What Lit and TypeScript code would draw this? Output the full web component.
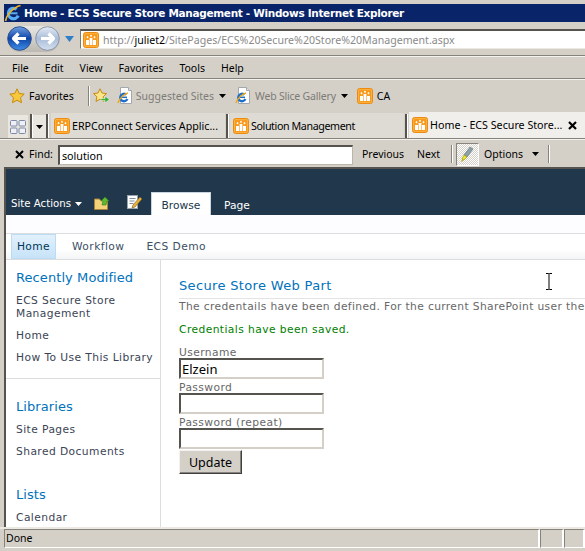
import { LitElement, html, css, svg } from 'lit';
import { customElement } from 'lit/decorators.js';

const spIcon = (size = 16) => html`<svg class="ico" width=${size} height=${size} viewBox="0 0 16 16">
  <rect x=".5" y=".5" width="15" height="15" rx="2" fill="#fbb03b" stroke="#ec8a12"/>
  <rect x="2" y="2" width="12" height="12" fill="#f79a1e"/>
  <path d="M3 8h3v5H3zM6.6 6h2.8v7H6.6zM10 8h3v5h-3z" fill="#fff"/>
  <path d="M4.500 4.200v2M3.500 5.200h2M8 2.800v2M7 3.800h2M11.500 4.200v2M10.500 5.200h2" stroke="#fff" stroke-width=".9"/>
</svg>`;

// page sheet with the blue e and the gold ring
const ieIcon = () => html`<svg class="ico" width="16" height="17" viewBox="0 0 16 17">
  <path d="M3.500 .5h8l3 3v13h-11z" fill="#fff" stroke="#a4a8ae"/>
  <path d="M11.500 .5v3h3" fill="#dfe3e8" stroke="#a4a8ae"/>
  <circle cx="7" cy="10.500" r="3.700" fill="none" stroke="#1f6fc8" stroke-width="2.400" stroke-dasharray="18 6" transform="rotate(25 7 10.500)"/>
  <path d="M4 10.300h6" stroke="#1f6fc8" stroke-width="1.500"/>
  <path d="M1 16c1-4 6-9 10-10" fill="none" stroke="#efa815" stroke-width="1.400"/>
</svg>`;

const arrowDown = (color = '#000') => html`<svg class="ico" width="7" height="4" viewBox="0 0 7 4"><path d="M0 0h7L3.500 4z" fill=${color}/></svg>`;

const navArrow = (points: string) => svg`<path d=${points} fill="none" stroke="#fff" stroke-width="3.200" stroke-linejoin="round"/>`;

@customElement('app-root')
export class AppRoot extends LitElement {
  static styles = css`
    :host {
      display: block;
      width: 585px;
      height: 551px;
      overflow: hidden;
      position: relative;
      background: #d4d0c8;
      font-family: 'Noto Sans', sans-serif;
      font-size: 10.500px;
      color: #000;
    }
    .ico { display: block; flex: none; }

    .title {
      margin: 4px 0 0 4px;
      height: 18px;
      background: #0a246a;
      color: #fff;
      font-family: 'DejaVu Sans', sans-serif;
      font-weight: bold;
      font-size: 10.500px;
      letter-spacing: -0.32px;
      display: flex;
      align-items: center;
      gap: 2px;
      white-space: nowrap;
    }

    .addr-row {
      height: 33px;
      display: flex;
      align-items: center;
      border-bottom: 1px solid #85837c;
      box-shadow: inset 0 -1px 0 #d4d0c8;
    }
    .nav-pill {
      margin-left: 7px;
      width: 53px;
      height: 26px;
      border-radius: 13px;
      background: linear-gradient(#e8e6e2, #bcb9b2);
      display: flex;
      align-items: center;
      gap: 3px;
      flex: none;
    }
    .nav-pill svg { flex: none; }
    .drop { margin: 0 6px 0 5px; }
    .addr {
      flex: 1;
      height: 20px;
      margin-top: 1px;
      background: #fff;
      border-top: 2px solid #55534e;
      border-left: 1px solid #7c7a74;
      border-bottom: 1px solid #ece9e2;
      display: flex;
      align-items: center;
      box-sizing: border-box;
      padding-left: 2px;
      gap: 4px;
      color: #8a8a8a;
      font-size: 10.600px;
      white-space: nowrap;
    }
    .addr b { font-weight: normal; color: #000; }

    .menu {
      border-top: 1px solid #f4f2ee;
      height: 21px;
      display: flex;
      align-items: center;
      padding-left: 12px;
      gap: 16px;
      border-bottom: 1px solid #85837c;
    }
    .favs {
      border-top: 1px solid #f4f2ee;
      height: 31px;
      display: flex;
      align-items: center;
      padding-left: 9px;
      white-space: nowrap;
    }
    .favs .gray { color: #7d7b76; }
    .favs .slice { letter-spacing: -0.2px; }
    .favs .sep { width: 1px; height: 20px; background: #85837c; box-shadow: 1px 0 0 #fff; margin: 0 4px 0 14px; }

    .tabs {
      height: 27px;
      display: flex;
      align-items: flex-end;
      border-bottom: 1px solid #85837c;
      box-shadow: 0 1px 0 #f4f2ee;
      white-space: nowrap;
      font-size: 10.700px;
    }
    .tile {
      margin-left: 8px;
      width: 20px;
      height: 23px;
      display: flex;
      align-items: center;
      justify-content: center;
      background: #e9e6e0;
      flex: none;
    }
    .vsep { width: 2px; height: 24px; background: #55534e; box-shadow: 1px 0 0 #fff; flex: none; }
    .vsep.lead { margin-left: 2px; }
    .tab-drop { width: 13px; height: 23px; margin-left: 1px; background: #e9e6e0; display: flex; align-items: center; justify-content: center; flex: none; }
    .tab {
      height: 25px;
      display: flex;
      align-items: center;
      gap: 2px;
      padding-left: 3px;
      background: #dedbd4;
      box-sizing: border-box;
      flex: none;
    }
    .tab.t1 { width: 174px; margin: 0 1px 0 3px; }
    .tab.t2 { width: 174px; margin: 0 1px 0 2px; letter-spacing: -0.4px; }
    .tab.active {
      flex: 1;
      height: 26px;
      margin-left: 2px;
      background: #f1efec;
    }
    .tab .close { margin-left: 4px; }

    .find {
      height: 28px;
      box-sizing: border-box;
      padding-top: 2px;
      display: flex;
      align-items: center;
      white-space: nowrap;
    }
    .find svg.x { margin-left: 15px; }
    .find .lbl { margin-left: 5px; width: 29px; }
    .find input {
      width: 295px;
      height: 20px;
      box-sizing: border-box;
      margin: 2px 0 0;
      padding: 0 0 0 2px;
      border: 1px solid #b9b6ae;
      border-top: 2px solid #55534e;
      border-left: 2px solid #55534e;
      border-radius: 0;
      font: 10.700px 'Noto Sans', sans-serif;
      outline: none;
    }
    .find .prev { margin-left: 9px; width: 55px; }
    .find .next { width: 34px; }
    .find .bar { width: 1px; height: 18px; background: #85837c; box-shadow: 1px 0 0 #fff; flex: none; }
    .find .bar.end { margin-left: 9px; }
    .pen {
      width: 23px;
      height: 23px;
      margin: 0 5px 0 4px;
      box-sizing: border-box;
      border: 1px solid #85837c;
      border-right-color: #fff;
      border-bottom-color: #fff;
      background: repeating-conic-gradient(#fff 0 25%, #d4d0c8 0 50%) 0 0 / 2px 2px;
      display: flex;
      align-items: center;
      justify-content: center;
      flex: none;
    }
    .find .opt { width: 48px; }

    .page {
      height: 360px;
      margin-left: 4px;
      background: #fff;
      border-left: 2px solid #55534e;
      border-top: 2px solid #55534e;
      box-sizing: border-box;
      font-family: 'DejaVu Sans', sans-serif;
      font-size: 10.700px;
      display: flex;
      flex-direction: column;
      overflow: hidden;
      position: relative;
      white-space: nowrap;
    }
    .ribbon {
      height: 46px;
      flex: none;
      background: #21374c;
      display: flex;
      align-items: flex-end;
      color: #fff;
    }
    .ribbon .actions {
      display: flex;
      align-items: center;
      gap: 4px;
      height: 13px;
      margin: 0 0 0 5px;
      width: 83px;
      padding-bottom: 5px;
      font-size: 10.200px;
    }
    .ribbon .rib-ico { margin-bottom: 5px; }
    .ribbon .rib-ico.a { margin-right: 16px; }
    .ribbon .rib-ico.b { margin-right: 9px; }
    .rib-tab { width: 60px; height: 23px; box-sizing: border-box; padding-top: 3px; display: flex; align-items: center; justify-content: center; color: #21374c; }
    .rib-tab.on { background: #fff; box-shadow: inset 0 1px 0 #c6d6e4, inset 1px 0 0 #c6d6e4, inset -1px 0 0 #c6d6e4; }
    .rib-tab.off { color: #fff; width: 52px; }
    .strip { height: 18px; flex: none; background: #fdfdff; border-bottom: 1px solid #dbddde; }
    .topnav {
      height: 25px;
      flex: none;
      display: flex;
      align-items: center;
      padding-left: 5px;
      border-bottom: 1px solid #dbddde;
      color: #3b4f65;
      letter-spacing: .42px;
      background: linear-gradient(#fff 60%, #f4f5f6);
    }
    .topnav span { padding: 0 16px; }
    .topnav span.last { padding-left: 6px; }
    .topnav .sel {
      height: 25px;
      width: 45px;
      box-sizing: border-box;
      padding: 0;
      display: flex;
      align-items: center;
      justify-content: center;
      color: #003759;
      background: linear-gradient(#e2f0fb, #c7e3f8);
      border: 1px solid #bcdcf3;
    }
    .body { flex: 1; display: flex; min-height: 0; }
    .side {
      width: 154px;
      flex: none;
      border-right: 1px solid #dbddde;
      color: #3b4455;
      letter-spacing: .42px;
    }
    .group { padding: 8px 0 0 10px; }
    .group.first { padding-bottom: 14px; border-bottom: 1px solid #dbddde; }
    .group.second { padding-top: 18px; }
    .group.third { padding-top: 27px; }
    .group h3 { margin: 0; font-weight: normal; font-size: 13px; line-height: 20px; color: #0072bc; letter-spacing: .08px; }
    .group div { line-height: 13px; margin-top: 9px; }
    .group h3 + div { margin-top: 6px; }
    .main { flex: 1; min-width: 0; }
    .main h2 {
      margin: 16px 0 0 18px;
      padding-bottom: 2px;
      border-bottom: 1px solid #e4e4e4;
      font-weight: normal;
      font-size: 13px;
      line-height: 20px;
      letter-spacing: .34px;
      color: #0072bc;
    }
    .form { padding-left: 18px; color: #676767; letter-spacing: .42px; }
    .form p { margin: 0; height: 14px; line-height: 16px; }
    .form p.desc { letter-spacing: .36px; }
    .form p.ok { margin-top: 9px; color: #008000; }
    .form label { display: block; height: 14px; line-height: 18px; }
    .form label.first { margin-top: 8px; }
    .form input {
      display: block;
      width: 145px;
      height: 21px;
      box-sizing: border-box;
      margin: 0;
      padding: 0 0 0 1px;
      border: 2px solid #d4d0c8;
      border-top-color: #55534e;
      border-left-color: #55534e;
      border-radius: 0;
      background: #fff;
      color: #000;
      font: 13px 'Noto Sans', sans-serif;
      outline: none;
    }
    .form button {
      display: block;
      width: 63px;
      height: 24px;
      margin-top: 1px;
      padding: 0;
      background: #d4d0c8;
      border: 1px solid #404040;
      border-top-color: #f4f2ee;
      border-left-color: #f4f2ee;
      box-shadow: inset -1px -1px 0 #85837c;
      border-radius: 0;
      color: #000;
      font: 12.500px 'Noto Sans', sans-serif;
    }

    .status {
      height: 24px;
      box-sizing: border-box;
      border-top: 2px solid #ece9e2;
      display: flex;
    }
    .pane {
      height: 19px;
      box-sizing: border-box;
      border-top: 1px solid #85837c;
      border-left: 1px solid #85837c;
      border-bottom: 1px solid #fff;
      border-right: 2px solid #fff;
      line-height: 16px;
      padding-left: 1px;
      margin-bottom: 3px;
    }
    .pane.wide { margin-left: 4px; width: 536px; }
    .pane.small { width: 24px; }
    .pane.rest { flex: 1; }

    .gap-4 { margin-left: 4px; }
    .gap-3 { margin-left: 3px; }
    .gap-7 { margin-left: 7px; }
    .arrow-a { margin: 0 9px 0 5px; }
    .arrow-b { margin: 0 9px 0 5px; }

    .cursor { position: absolute; left: 545px; top: 273px; }
  `;

  render() {
    return html`
      <div class="title">
        <svg class="ico" width="18" height="18" viewBox="0 0 18 18">
          <circle cx="9.500" cy="9.500" r="5.200" fill="none" stroke="#58aef5" stroke-width="3.200" stroke-dasharray="25 8" transform="rotate(25 9.500 9.500)"/>
          <path d="M5.500 9.300h8" stroke="#58aef5" stroke-width="2"/>
          <path d="M1.500 17c1-6 8-14 15-15.500" fill="none" stroke="#f4b41c" stroke-width="1.600"/>
        </svg>
        <span>Home - ECS Secure Store Management - Windows Internet Explorer</span>
      </div>

      <div class="addr-row">
        <div class="nav-pill">
          <svg width="25" height="25" viewBox="0 0 25 25">
            <defs>
              <linearGradient id="bk" x1="0" y1="0" x2="0" y2="1"><stop offset="0" stop-color="#6f9fe0"/><stop offset=".5" stop-color="#0f45a8"/><stop offset="1" stop-color="#3f8fe8"/></linearGradient>
              <linearGradient id="fw" x1="0" y1="0" x2="0" y2="1"><stop offset="0" stop-color="#e4eaf4"/><stop offset=".5" stop-color="#a9bcd8"/><stop offset="1" stop-color="#d4e0f0"/></linearGradient>
            </defs>
            <circle cx="12.500" cy="12.500" r="11.800" fill="url(#bk)" stroke="#2a4f8c"/>
            ${navArrow('M19 12.500H7M11.500 7.500l-5 5 5 5')}
          </svg>
          <svg width="25" height="25" viewBox="0 0 25 25">
            <circle cx="12.500" cy="12.500" r="11.800" fill="url(#fw)" stroke="#8a94a4"/>
            ${navArrow('M6 12.500h12M13.500 7.500l5 5-5 5')}
          </svg>
        </div>
        <svg class="drop" width="9" height="6" viewBox="0 0 9 6"><path d="M0 0h9L4.500 6z" fill="#2f7fc8"/></svg>
        <div class="addr">
          ${spIcon()}
          <span>http://<b>juliet2</b>/SitePages/ECS%20Secure%20Store%20Management.aspx</span>
        </div>
      </div>

      <div class="menu">
        <span>File</span><span>Edit</span><span>View</span><span>Favorites</span><span>Tools</span><span>Help</span>
      </div>

      <div class="favs">
        <svg class="ico" width="16" height="16" viewBox="0 0 16 16"><path d="M8 .8l2.200 4.700 5 .6-3.700 3.500 1 5.100L8 12.200l-4.500 2.500 1-5.100L.8 6.100l5-.6z" fill="#f7c83c" stroke="#c88a10"/></svg>
        <span class="gap-4">Favorites</span>
        <div class="sep"></div>
        <svg class="ico" width="17" height="16" viewBox="0 0 17 16"><path d="M7 .8l2 4.200 4.500.6-3.300 3.200.9 4.600L7 11.200l-4 2.200.9-4.600L.6 5.600 5 5z" fill="#fbe58a" stroke="#c88a10"/><path d="M8 10.500h4V8l4.500 3.500L12 15v-2.500H8z" fill="#3fae3f" stroke="#fff" stroke-width=".5"/></svg>
        <span class="gap-7"></span>${ieIcon()}
        <span class="gray gap-3">Suggested Sites</span>
        <span class="arrow-a">${arrowDown()}</span>
        ${ieIcon()}
        <span class="gray slice gap-4">Web Slice Gallery</span>
        <span class="arrow-b">${arrowDown()}</span>
        ${spIcon()}
        <span class="gap-4">CA</span>
      </div>

      <div class="tabs">
        <div class="tile">
          <svg width="16" height="14" viewBox="0 0 16 14"><g fill="#eef0f5" stroke="#7d8aa6"><rect x=".5" y=".5" width="6.500" height="5.500" rx="1"/><rect x="9" y=".5" width="6.500" height="5.500" rx="1"/><rect x=".5" y="8" width="6.500" height="5.500" rx="1"/><rect x="9" y="8" width="6.500" height="5.500" rx="1"/></g></svg>
        </div>
        <div class="vsep lead"></div>
        <div class="tab-drop">${arrowDown()}</div>
        <div class="vsep"></div>
        <div class="tab t1">${spIcon()}<span>ERPConnect Services Applic...</span></div>
        <div class="vsep"></div>
        <div class="tab t2">${spIcon()}<span>Solution Management</span></div>
        <div class="vsep"></div>
        <div class="tab active">${spIcon()}<span>Home - ECS Secure Store...</span>
          <svg class="close" width="9" height="9" viewBox="0 0 9 9"><path d="M1 1l7 7M8 1L1 8" stroke="#000" stroke-width="2.200"/></svg>
        </div>
      </div>

      <div class="find">
        <svg class="x" width="9" height="9" viewBox="0 0 9 9"><path d="M1 1l7 7M8 1L1 8" stroke="#000" stroke-width="2"/></svg>
        <span class="lbl">Find:</span>
        <input value="solution" readonly />
        <span class="prev">Previous</span>
        <span class="next">Next</span>
        <div class="bar"></div>
        <div class="pen">
          <svg width="15" height="19" viewBox="0 0 15 19"><path d="M10 2l3 2-6 8-3-2z" fill="#8aa0a8" stroke="#5f7078" stroke-width=".6"/><path d="M4 10l3 2-3 3-2-1z" fill="#ece62a" stroke="#9a9410" stroke-width=".6"/><path d="M2 14l2 1-3 2z" fill="#b8b020"/></svg>
        </div>
        <span class="opt">Options</span>
        ${arrowDown()}
        <div class="bar end"></div>
      </div>

      <div class="page">
        <div class="ribbon">
          <div class="actions"><span>Site Actions</span>${arrowDown('#fff')}</div>
          <svg class="ico rib-ico a" width="17" height="14" viewBox="0 0 17 14"><path d="M.5 3h5l1 1.500h7v9h-13z" fill="#f3d27a" stroke="#a5833a"/><path d="M8 9l1-4H7l4-4 4 4h-2l-1 4z" fill="#5cb82e" stroke="#2f7f1a" stroke-width=".6"/></svg>
          <svg class="ico rib-ico b" width="15" height="15" viewBox="0 0 15 15"><rect x=".5" y=".5" width="10" height="13" fill="#fff" stroke="#9aa4b0"/><path d="M2.500 3.500h6M2.500 6h5M2.500 8.500h4" stroke="#7f8fa0"/><path d="M13 2L6 10l-1 3 3-1 7-8z" fill="#e8b23a" stroke="#7a5a20" stroke-width=".6"/></svg>
          <div class="rib-tab on">Browse</div>
          <div class="rib-tab off">Page</div>
        </div>
        <div class="strip"></div>
        <div class="topnav">
          <span class="sel">Home</span><span>Workflow</span><span class="last">ECS Demo</span>
        </div>
        <div class="body">
          <div class="side">
            <div class="group first">
              <h3>Recently Modified</h3>
              <div>ECS Secure Store<br />Management</div>
              <div>Home</div>
              <div>How To Use This Library</div>
            </div>
            <div class="group second">
              <h3>Libraries</h3>
              <div>Site Pages</div>
              <div>Shared Documents</div>
            </div>
            <div class="group third">
              <h3>Lists</h3>
              <div>Calendar</div>
            </div>
          </div>
          <div class="main">
            <h2>Secure Store Web Part</h2>
            <div class="form">
              <p class="desc">The credentails have been defined. For the current SharePoint user the</p>
              <p class="ok">Credentials have been saved.</p>
              <label class="first">Username</label>
              <input value="Elzein" readonly />
              <label>Password</label>
              <input type="password" readonly />
              <label>Password (repeat)</label>
              <input type="password" readonly />
              <button>Update</button>
            </div>
          </div>
        </div>
      </div>

      <div class="status">
        <div class="pane wide">Done</div>
        <div class="pane small"></div>
        <div class="pane rest"></div>
      </div>

      <svg class="cursor" width="8" height="17" viewBox="0 0 8 17"><path d="M1 .5h2.500l.5.500.5-.500H7M4 1v15M1 16.500h2.500l.5-.500.500.500H7" fill="none" stroke="#000"/></svg>
    `;
  }
}
